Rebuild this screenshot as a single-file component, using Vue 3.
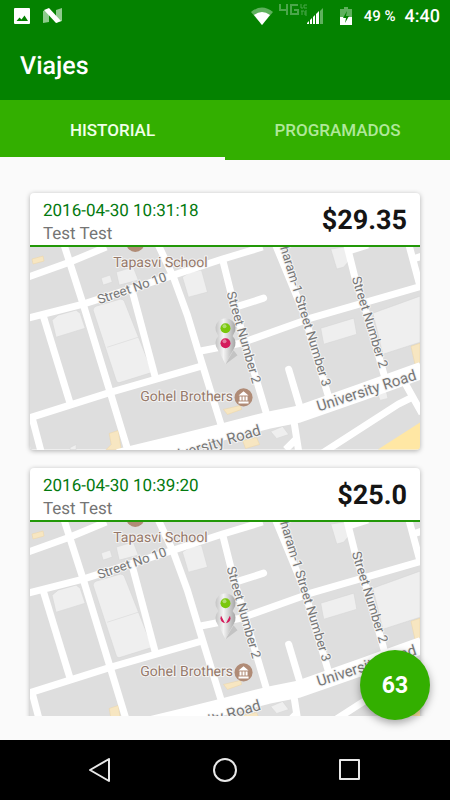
<template>
  <div class="screen">
    <header class="app-header">
      <div class="status-bar">
        <div class="status-left">
          <svg class="icon-photo" viewBox="0 0 16 16">
            <rect width="16" height="16" rx="1" fill="#fff" />
            <path d="M2.500 13 L5.500 9.500 L7.500 11.500 L10.500 7.500 L14 13 Z" fill="#048200" />
          </svg>
          <svg class="icon-nougat" viewBox="0 0 19 16">
            <path d="M0 3 L6 1 V14 L0 15 Z M13 2 L19 0 V13 L13 15 Z" fill="#8ecb8c" />
            <path d="M1 2 L6 0 L18 13 L13 15 Z" fill="#fff" />
          </svg>
        </div>
        <div class="status-right">
          <svg class="icon-wifi" viewBox="0 0 22 18">
            <path d="M0 5 Q11 -4 22 5 L11 18 Z" fill="#5fb15d" />
            <path d="M3 8 Q11 2 19 8 L11 18 Z" fill="#fff" />
          </svg>
          <svg class="icon-network" viewBox="0 0 28 12">
            <path d="M1 0 V6 H9 M8 0 V11 M19 1 H12 V10 H19 V6 H15" fill="none" stroke="#4ba64a" stroke-width="2" />
            <path d="M22 0 V4 H24 M25 1 H28 M25 4 H28 M25 1 V4 M22 7 H25 M23 7 V11 M28 7 H26 V11 H28 M26 9 H28" fill="none" stroke="#4ba64a" />
          </svg>
          <svg class="icon-signal" viewBox="0 0 16 16">
            <path d="M13 3 L16 0 V16 H13 Z" fill="#5fb15d" />
            <path d="M0 16 V15 L2 13 V16 Z M3 16 V12 L5 10 V16 Z M6 16 V9 L8 7 V16 Z M9 16 V6 L12 3 V16 Z" fill="#fff" />
          </svg>
          <svg class="icon-battery" viewBox="0 0 12 18">
            <path d="M4 0 H8 V2 H12 V18 H0 V2 H4 Z" fill="#5fb15d" />
            <path d="M0 10 H12 V18 H0 Z" fill="#fff" />
            <path d="M7 4 L3 11 H6 L5 16 L9 9 H6 Z" fill="#048200" />
          </svg>
          <span class="battery-level">49 %</span>
          <span class="clock">4:40</span>
        </div>
      </div>
      <h1 class="title">Viajes</h1>
    </header>

    <nav class="tabs">
      <button
        v-for="tab in tabs"
        :key="tab"
        class="tab"
        :class="{ active: tab === activeTab }"
        @click="activeTab = tab"
      >{{ tab }}</button>
    </nav>

    <main class="content">
      <div class="trip-list">
        <article v-for="trip in trips" :key="trip.date" class="trip-card">
          <div class="trip-head">
            <div class="trip-info">
              <span class="trip-date">{{ trip.date }}</span>
              <span class="trip-name">{{ trip.name }}</span>
            </div>
            <strong class="trip-price">{{ trip.price }}</strong>
          </div>

          <svg class="trip-map" viewBox="0 0 389 202">
            <defs>
              <linearGradient :id="'pin' + trip.id" x1="0" x2="1" y1="0" y2="0">
                <stop offset="0" stop-color="#c4c4c4" />
                <stop offset="0.400" stop-color="#f4f4f4" />
                <stop offset="1" stop-color="#a4a4a4" />
              </linearGradient>
            </defs>
            <rect width="389" height="202" fill="#dedede" />

            <!-- buildings -->
            <g fill="#efefef" stroke="#d4d4d4" stroke-width="0.500">
              <path d="M342 66 L389 49 V95 L352 107 Z" />
              <path d="M63 63 Q63 60 66 59 L90 52 Q93 52 94 54 L122 125 L90 135 Q87 136 86 133 Z" />
              <path d="M77 100 L108 90" />
              <path d="M22 73 L28 68 L46 63 L50 66 L55 81 L26 90 Z" />
              <path d="M71 31 L80 28 L82 35 L73 38 Z M86 25 L103 20 L108 33 L89 38 Z" />
              <path d="M152 30 L160 25 L171 23 L177 45 L158 50 Z" />
              <path d="M290 81 L323 71 L326 87 L293 97 Z" />
              <path d="M300 2 L314 0 L318 14 L313 20 L306 22 Z" />
              <path d="M240 184 L252 179 L258 187 L246 191 Z M346 143 L355 142 L357 151 L349 153 Z" />
              <path d="M40 200 L46 197 V202 H40 Z" />
            </g>
            <g fill="#f7e6c1" stroke="#ecd5a5" stroke-width="0.500">
              <path d="M2 12 L13 9 L14 14 L3 17 Z" />
              <path d="M79 186 L88 183 L91 202 H76 L81 197 Z" />
              <path d="M193 162 L210 158 L211 162 L197 167 Z M212 193 L226 190 L229 197 L215 201 Z" />
              <path d="M380 99 L389 96 V115 L384 117 Z" />
            </g>
            <path d="M347 202 L389 175 V202 Z" fill="#ffe7a4" />

            <!-- roads -->
            <g fill="none" stroke="#fff" stroke-linejoin="round" stroke-width="7">
              <path d="M-2 30 L40 15 L76 0" />
              <path d="M-2 71 L53 57 L137 30 L192 12 L232 0" />
              <path d="M34 -2 L53 57 L80 145 L98 204" />
              <path d="M13 68 L40 156" />
              <path d="M-2 171 L80 145 L170 119" />
              <path d="M128 -2 L143 30 L157 68 L170 111 L192 182" />
              <path d="M102 44 L125 130" />
              <path d="M192 12 L203 56 L237 170" />
              <path d="M208 59 L233 51" stroke-linecap="round" />
              <path d="M169 104 L210 96 L280 71 L391 39" />
              <path d="M245 -2 L273 66 L298 150" />
              <path d="M316 -2 L324 30 L337 70 L355 134" />
              <path d="M318 4 L337 -2 M378 -2 L389 39 M382 12 L391 9" />
              <path d="M258 122 L270 162" stroke-linecap="round" />
              <path d="M263 172 L268 204 M255 202 L267 190" />
              <path d="M291 206 L367 157 L381 150 M373 134 L391 166" />
              <path d="M2 170 L11 204" />
              <path d="M88 210 L150 195 L190 185 L237 173 L267 167 L330 145 L391 123" stroke-width="17" />
            </g>

            <g class="street-label">
              <text transform="translate(69 57) rotate(-19)">Street No 10</text>
              <text transform="translate(196 46) rotate(74)">Street Number 2</text>
              <text transform="translate(292 140) rotate(73)" text-anchor="end">haram-1 Street Number 3</text>
              <text transform="translate(321 31) rotate(73)">Street Number 2</text>
            </g>
            <g class="road-label">
              <text transform="translate(288 164) rotate(-18)">University Road</text>
              <text transform="translate(231 187) rotate(-17)" text-anchor="end">University Road</text>
            </g>
            <g class="place-label">
              <text x="83" y="20">Tapasvi School</text>
              <text x="110" y="154">Gohel Brothers</text>
            </g>
            <circle cx="105" cy="-4" r="9" fill="#b08b76" />
            <circle cx="105" cy="-4" r="4" fill="#fff" />
            <circle cx="213" cy="150" r="9" fill="#b08b76" />
            <path d="M208 148 L213 144 L218 148 Z M208 154 H218 V156 H208 Z M209 149 H211 V153 H209 Z M212 149 H214 V153 H212 Z M215 149 H217 V153 H215 Z" fill="#fff" />

            <path d="M195 117 L207 108 L203 103 Z" fill="#000" opacity="0.120" />
            <g v-for="pin in trip.pins" :key="pin.y">
              <path
                :transform="`translate(195 ${pin.y})`"
                d="M0 21 Q-4 13 -8 6 A10 10 0 1 1 8 6 Q4 13 0 21 Z"
                :fill="`url(#pin${trip.id})`"
              />
              <circle cx="195" :cy="pin.y" r="5" :fill="pin.color" />
              <circle cx="194" :cy="pin.y - 2" r="2" fill="#fff" opacity="0.400" />
            </g>
          </svg>
        </article>
      </div>
      <button class="fab">63</button>
    </main>

    <footer class="nav-bar">
      <button class="nav-btn" aria-label="Atrás">
        <svg viewBox="0 0 24 24"><path d="M21 1 V23 L2 12 Z" /></svg>
      </button>
      <button class="nav-btn" aria-label="Inicio">
        <svg viewBox="0 0 24 24"><circle cx="12" cy="12" r="11" /></svg>
      </button>
      <button class="nav-btn" aria-label="Recientes">
        <svg viewBox="0 0 24 24"><rect x="2" y="2" width="19" height="19" /></svg>
      </button>
    </footer>
  </div>
</template>

<script setup>
import { ref } from 'vue'

const tabs = ['HISTORIAL', 'PROGRAMADOS']
const activeTab = ref('HISTORIAL')

const green = '#7ac70c'
const pink = '#d41c5c'

// the last pin is drawn on top
const trips = [
  {
    id: 1,
    date: '2016-04-30 10:31:18',
    name: 'Test Test',
    price: '$29.35',
    pins: [{ y: 81, color: green }, { y: 96, color: pink }]
  },
  {
    id: 2,
    date: '2016-04-30 10:39:20',
    name: 'Test Test',
    price: '$25.0',
    pins: [{ y: 96, color: pink }, { y: 81, color: green }]
  }
]
</script>

<style>
body {
  margin: 0;
  background: #fafafa;
}
</style>

<style scoped>
.screen {
  display: flex;
  flex-direction: column;
  height: 100vh;
  font-family: Roboto, "Liberation Sans", sans-serif;
  text-rendering: geometricPrecision;
  background: #fafafa;
}

button {
  border: none;
  padding: 0;
  font-family: inherit;
  cursor: pointer;
}

/* header */
.app-header {
  flex: none;
  height: 100px;
  background: #048200;
  color: #fff;
}

.status-bar {
  display: flex;
  justify-content: space-between;
  height: 32px;
  padding: 0 10px 0 14px;
}

.status-left,
.status-right {
  display: flex;
  align-items: center;
}

.status-left { gap: 13px; }

.icon-photo { width: 16px; height: 16px; }
.icon-nougat { width: 19px; height: 16px; }
.icon-wifi { width: 22px; height: 18px; margin-right: 6px; }
.icon-network { width: 28px; height: 12px; margin-bottom: 12px; }
.icon-signal { width: 16px; height: 16px; margin-right: 17px; }
.icon-battery { width: 12px; height: 18px; margin-right: 12px; }

.battery-level {
  margin-right: 9px;
  font-size: 15px;
  font-weight: 500;
}

.clock {
  font-size: 18px;
  font-weight: 500;
}

.title {
  margin: 0;
  padding: 19px 20px 0;
  font-size: 25px;
  line-height: 32px;
  font-weight: 500;
}

/* tabs */
.tabs {
  flex: none;
  display: flex;
  height: 60px;
  background: #33af00;
}

.tab {
  flex: 1;
  background: none;
  border-top: 3px solid transparent;
  border-bottom: 3px solid transparent;
  font-size: 17px;
  font-weight: 500;
  color: #b0e89a;
}

.tab.active {
  color: #f0ffe8;
  border-bottom-color: #fafafa;
}

/* trips */
.content {
  position: relative;
  flex: 1;
  min-height: 0;
  display: flex;
  padding-bottom: 24px;
}

.trip-list {
  flex: 1;
  display: flex;
  flex-direction: column;
  gap: 18px;
  padding: 33px 30px 0;
  overflow-y: auto;
  scrollbar-width: none;
}

.trip-card {
  flex: none;
  border-radius: 4px;
  background: #fff;
  box-shadow: 0 1px 5px rgba(0, 0, 0, 0.3);
  overflow: hidden;
}

.trip-head {
  display: flex;
  justify-content: space-between;
  align-items: center;
  height: 52px;
  padding: 0 13px;
  border-bottom: 2px solid #229808;
}

.trip-info {
  display: flex;
  flex-direction: column;
  padding-top: 8px;
  font-size: 17px;
  line-height: 23px;
}

.trip-date { color: #047a10; }
.trip-name { color: #757575; }

.trip-price {
  padding-top: 2px;
  font-size: 27px;
  font-weight: 700;
  color: #151515;
}

.trip-map {
  display: block;
  width: 100%;
}

.street-label,
.road-label,
.place-label {
  font-size: 13px;
  fill: #777;
  stroke: #f4f4f4;
  stroke-width: 2px;
  stroke-linejoin: round;
  paint-order: stroke;
}

.road-label { font-size: 15px; }

.place-label {
  font-size: 14px;
  fill: #96796a;
}

.fab {
  position: absolute;
  right: 20px;
  bottom: 20px;
  width: 70px;
  height: 70px;
  border-radius: 50%;
  background: #33af00;
  color: #fff;
  font-size: 23px;
  font-weight: 700;
  box-shadow: 0 3px 8px rgba(0, 0, 0, 0.35);
}

/* system navigation */
.nav-bar {
  flex: none;
  display: flex;
  justify-content: center;
  gap: 101px;
  height: 60px;
  background: #000;
}

.nav-btn {
  display: flex;
  align-items: center;
  background: none;
}

.nav-btn svg {
  width: 24px;
  height: 24px;
  fill: none;
  stroke: #e8e8e8;
  stroke-width: 2px;
  stroke-linejoin: round;
}
</style>
